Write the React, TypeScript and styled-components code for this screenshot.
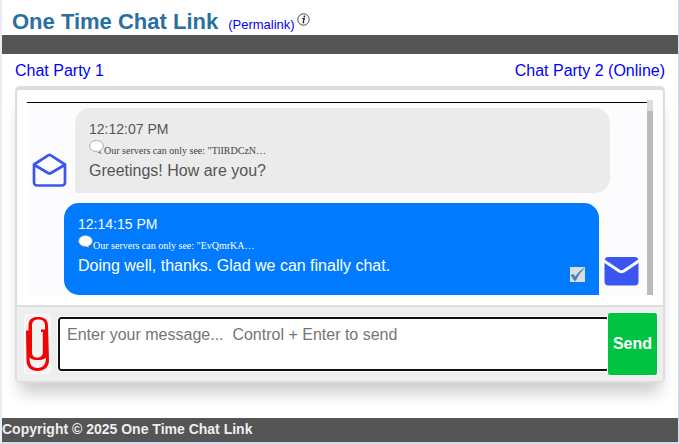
import React from "react";
import styled, { createGlobalStyle } from "styled-components";

const GlobalStyle = createGlobalStyle`
  *, *::before, *::after { box-sizing: border-box; }
  body {
    margin: 0;
    background: #fff;
    font-family: "Liberation Sans", Arial, Helvetica, sans-serif;
  }
`;

const Page = styled.div`
  display: flex;
  flex-direction: column;
  min-height: 100vh;
  border: solid #d6deee;
  border-width: 0 1px 2px 2px;
  border-left-color: #e9edf6;
  background: #fff;
`;

const Header = styled.header`
  display: flex;
  align-items: baseline;
  height: 35px;
  padding: 9px 10px 0;
`;

const Title = styled.h1`
  margin: 0 10px 0 0;
  color: #2a6f9f;
  font-size: 22px;
  line-height: 26px;
`;

const Permalink = styled.a`
  color: #00f;
  font-size: 13px;
  text-decoration: none;
`;

const InfoButton = styled.button`
  align-self: flex-start;
  display: flex;
  margin: 4px 0 0 2px;
  padding: 0;
  border: 0;
  background: none;
`;

const Band = styled.div`
  height: 19px;
  background: #555;
`;

const Main = styled.main`
  flex: 1;
  padding: 8px 13px 35px;
`;

const Parties = styled.nav`
  display: flex;
  justify-content: space-between;
  height: 24px;
`;

const PartyLink = styled.a`
  color: #00f;
  font-size: 16px;
  line-height: 18px;
  text-decoration: none;
`;

const Card = styled.section`
  border: 2px solid #ddd;
  border-top-width: 4px;
  border-radius: 5px;
  background: #fff;
  box-shadow: 0 15px 15px -5px rgba(0, 0, 0, 0.2);
`;

const Chat = styled.div`
  display: flex;
  margin: 10px;
`;

const Messages = styled.div`
  flex: 1;
  min-width: 0;
  margin-top: 2px;
  padding-top: 5px;
  border-top: 1px solid #000;
  background: #fcfcfe;
`;

const ScrollTrack = styled.div`
  width: 6px;
  padding-top: 11px;
  background: #ddd;
`;

const ScrollThumb = styled.div`
  height: 100%;
  background: #bbb;
`;

const Row = styled.article<{ $own?: boolean }>`
  display: flex;
  flex-direction: ${(p) => (p.$own ? "row-reverse" : "row")};
  align-items: flex-end;
  gap: ${(p) => (p.$own ? 4 : 7)}px;
  padding: ${(p) => (p.$own ? "0 8px 0 37px" : "0 37px 0 5px")};
  & + & { margin-top: 10px; }
`;

const Envelope = styled.svg`
  flex: none;
  width: 36px;
  height: 36px;
  margin-bottom: 5px;
`;

const Bubble = styled.div<{ $own?: boolean }>`
  flex: 1;
  min-width: 0;
  display: grid;
  grid-template-columns: 1fr auto;
  align-items: end;
  padding: ${(p) => (p.$own ? "13px 14px" : "13px 14px 12px")};
  border-radius: ${(p) => (p.$own ? "15px 15px 0 15px" : "15px 15px 15px 0")};
  background: ${(p) => (p.$own ? "#007bff" : "#ebebeb")};
  color: ${(p) => (p.$own ? "#fff" : "#555")};
`;

const Time = styled.time`
  display: block;
  font-size: 14px;
  line-height: 16px;
`;

const Cipher = styled.div<{ $own?: boolean }>`
  display: flex;
  align-items: flex-end;
  height: 20px;
  color: ${(p) => (p.$own ? "#fff" : "#444")};
  font-family: "Liberation Serif", "Times New Roman", serif;
  font-size: 10px;
  line-height: 12px;
  white-space: nowrap;
`;

const Balloon = styled.svg`
  width: 15px;
  height: 15px;
  margin-bottom: 2px;
`;

const Body = styled.p<{ $own?: boolean }>`
  margin: 0;
  padding-top: 5px;
  font-size: 16px;
  line-height: 18px;
  height: ${(p) => (p.$own ? 30 : 24)}px;
`;

const Read = styled.svg`
  width: 15px;
  height: 15px;
`;

const Composer = styled.form`
  display: flex;
  align-items: center;
  height: 76px;
  padding: 0 6px 0 7px;
  border-top: 2px solid #ddd;
  border-radius: 0 0 3px 3px;
  background: #eee;
`;

const AttachButton = styled.button`
  flex: none;
  display: flex;
  width: 27px;
  height: 60px;
  margin-right: 7px;
  padding: 0;
  border: 1px solid #fafafa;
  border-radius: 3px;
  background: #f3f3f3;
`;

const MessageBox = styled.textarea`
  flex: 1;
  min-width: 0;
  height: 54px;
  margin: 0 -2px 0 0;
  padding: 6px 7px;
  border: 2px solid #101010;
  border-radius: 3px;
  outline: 1px solid #fff;
  background: #fff;
  color: #222;
  font: 16px/20px "Liberation Sans", Arial, sans-serif;
  resize: none;
  &::placeholder { color: #757575; }
`;

const SendButton = styled.button`
  z-index: 1;
  flex: none;
  width: 51px;
  height: 64px;
  margin-right: -1px;
  padding: 0;
  border: 1px solid #fff;
  border-radius: 3px;
  background: #00c441;
  color: #fff;
  font: bold 16px "Liberation Sans", Arial, sans-serif;
`;

const Footer = styled.footer`
  height: 24px;
  background: #555;
  color: #eee;
  font-size: 14px;
  font-weight: bold;
  line-height: 23px;
`;

const InfoIcon = () => (
  <svg width="13" height="13" viewBox="0 0 13 13" aria-hidden="true">
    <circle cx="6.5" cy="6.5" r="5.7" fill="#fff" stroke="#333" strokeWidth="0.9" />
    <circle cx="7.3" cy="3.5" r="0.9" fill="#222" />
    <path d="M5.3 5.6h1.9L6.2 9.6h1" fill="none" stroke="#222" strokeWidth="1.3" />
  </svg>
);

const OpenEnvelope = () => (
  <Envelope viewBox="0 0 36 36" role="img" aria-label="Read">
    <path
      d="M2 12.500 16.500 3.200q1-.6 2 0L33 12.500V30.500a3 3 0 0 1-3 3H5a3 3 0 0 1-3-3Z M2.500 13 16 21q1.500.9 3 0L32.500 13"
      fill="none"
      stroke="#3b55f0"
      strokeWidth="2.7"
      strokeLinejoin="round"
    />
  </Envelope>
);

const ClosedEnvelope = () => (
  <Envelope viewBox="0 0 36 36" role="img" aria-label="Delivered">
    <rect x="1.500" y="3" width="34" height="28.500" rx="4" fill="#3b55f0" />
    <path d="M0 6.200 16.500 17.200q2 1.200 4 0L37 6.200" fill="none" stroke="#fcfcfe" strokeWidth="3" />
  </Envelope>
);

const BalloonIcon = () => (
  <Balloon viewBox="0 0 15 15" aria-hidden="true">
    <path d="M7 11q3 3 6.500 3-2.500-1-2.400-4z" fill="#555" />
    <ellipse cx="7.500" cy="6" rx="6.900" ry="5.500" fill="#fff" stroke="#999" strokeWidth="0.800" />
    <path d="M7.500 10.500q1.500 1.800 3.500 2.300-1-1.300-1-3z" fill="#eee" />
  </Balloon>
);

const ReadTick = () => (
  <Read viewBox="0 0 15 15" role="img" aria-label="Seen">
    <path d="M0 0h15v15H0z" fill="#ddd" />
    <path d="M1 8.300 3.200 7 5 10Q8.500 4.500 14.200 1 9 6.500 5.700 13.500H4.200Z" fill="#3c82c8" stroke="#3c82c8" strokeWidth="0.400" />
  </Read>
);

const Paperclip = () => (
  <svg width="25" height="58" viewBox="0 0 25 58" aria-hidden="true">
    <path
      fill="#f00505"
      fillRule="evenodd"
      d="M1 15.500H3.500V11C3.500 4.500 6.500 2 13 2S23 4.500 23 11L24 45C24 52 19.500 56 12.500 56S1.500 52 1.500 45Z
        M7 11V37C7 41 9 42.500 12.300 42.500S17.800 41 17.800 37V17H16V14.500H20V11C20 6.500 18 4.500 13.500 4.500S7 6.500 7 11Z
        M4.500 42.500C4.500 49.500 7 53 12.500 53S21 49.500 21 42.500C19 44.500 16.500 45 12.700 45S6.500 44.500 4.500 42.500Z"
    />
  </svg>
);

const messages = [
  { time: "12:12:07 PM", cipher: "TlIRDCzN…", body: "Greetings! How are you?", own: false },
  { time: "12:14:15 PM", cipher: "EvQmrKA…", body: "Doing well, thanks. Glad we can finally chat.", own: true },
];

export default function App() {
  return (
    <>
      <GlobalStyle />
      <Page>
        <Header>
          <Title>One Time Chat Link</Title>
          <Permalink href="#permalink">(Permalink)</Permalink>
          <InfoButton type="button" aria-label="About permalinks">
            <InfoIcon />
          </InfoButton>
        </Header>
        <Band />
        <Main>
          <Parties>
            <PartyLink href="#party-1">Chat Party 1</PartyLink>
            <PartyLink href="#party-2">Chat Party 2 (Online)</PartyLink>
          </Parties>
          <Card>
            <Chat>
              <Messages>
                {messages.map((m) => (
                  <Row key={m.time} $own={m.own}>
                    {m.own ? <ClosedEnvelope /> : <OpenEnvelope />}
                    <Bubble $own={m.own}>
                      <div>
                        <Time>{m.time}</Time>
                        <Cipher $own={m.own}>
                          <BalloonIcon />
                          <span>Our servers can only see: "{m.cipher}</span>
                        </Cipher>
                        <Body $own={m.own}>{m.body}</Body>
                      </div>
                      {m.own && <ReadTick />}
                    </Bubble>
                  </Row>
                ))}
              </Messages>
              <ScrollTrack>
                <ScrollThumb />
              </ScrollTrack>
            </Chat>
            <Composer onSubmit={(e) => e.preventDefault()}>
              <AttachButton type="button" aria-label="Attach a file">
                <Paperclip />
              </AttachButton>
              <MessageBox aria-label="Message" placeholder="Enter your message...  Control + Enter to send" />
              <SendButton type="submit">Send</SendButton>
            </Composer>
          </Card>
        </Main>
        <Footer>Copyright © 2025 One Time Chat Link</Footer>
      </Page>
    </>
  );
}
